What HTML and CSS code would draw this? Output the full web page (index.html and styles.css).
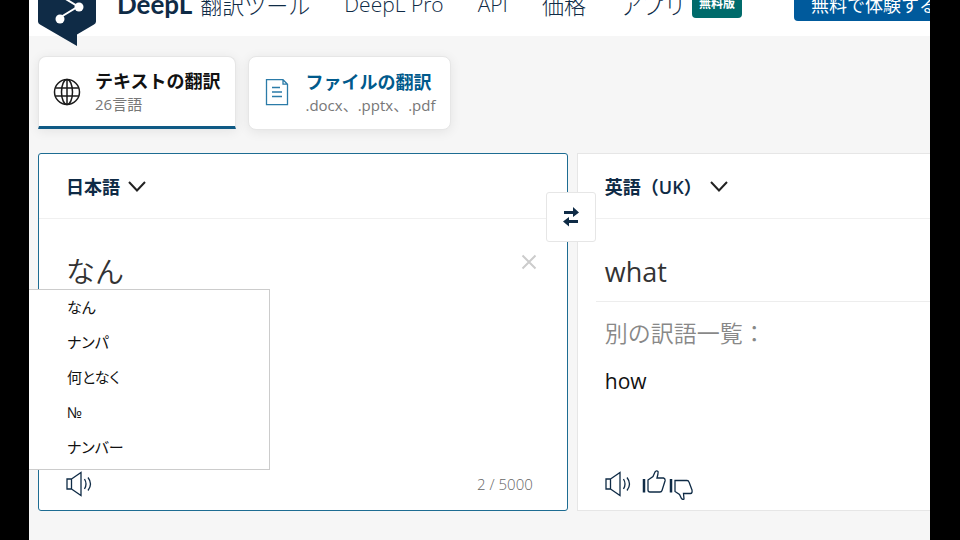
FILE: index.html
```html
<!DOCTYPE html>
<html lang="ja">
<head>
  <meta charset="UTF-8">
  <meta name="viewport" content="width=device-width, initial-scale=1.0">
  <title>DeepL 翻訳ツール</title>
  <link rel="stylesheet" href="styles.css">
</head>
<body>
  <div class="page">
    <header class="site-header">
      <a class="logo" href="#" aria-label="DeepL">
        <svg viewBox="0 0 58 66" width="58" height="66">
          <path fill="#0f2b46" d="M0 16.500Q0 14.500 2 13.500L27 .6Q29 -.4 31 .6L56 13.500Q58 14.500 58 16.500V41.500Q58 43.500 56 44.600L39 54.500V66L2 44.600Q0 43.500 0 41.500Z"/>
          <path fill="none" stroke="#fff" stroke-width="2" d="M22 15.500L40 26.500L22 37.500"/>
          <circle cx="22" cy="15" r="4.500" fill="#fff"/>
          <circle cx="41" cy="27" r="4.500" fill="#fff"/>
          <circle cx="22" cy="39" r="4.500" fill="#fff"/>
        </svg>
      </a>
      <a class="brand" href="#"><strong>DeepL</strong> <span>翻訳ツール</span></a>
      <nav>
        <a class="latin" href="#">DeepL Pro</a>
        <a class="latin" href="#">API</a>
        <a href="#">価格</a>
        <a href="#">アプリ<span class="badge">無料版</span></a>
      </nav>
      <button class="trial" type="button">無料で体験する</button>
    </header>

    <main>
      <div class="tabs">
        <button class="tab active" type="button">
          <svg viewBox="0 0 28 28" width="28" height="28" fill="none" stroke="#1b1b1b" stroke-width="1.500">
            <circle cx="14" cy="14" r="12.500"/>
            <ellipse cx="14" cy="14" rx="5.500" ry="12.500"/>
            <path d="M14 1.500V26.500M2.500 10H25.500M2.500 18H25.500"/>
          </svg>
          <span class="tab-text"><b>テキストの翻訳</b><small>26言語</small></span>
        </button>
        <button class="tab" type="button">
          <svg viewBox="0 0 28 28" width="28" height="28" fill="none" stroke="#2b7ba8" stroke-width="1.300">
            <path d="M3.500 .7H20L24.500 5.200V25.700H3.500ZM20 .7V5.200H24.500M9 8.500H17M9 13H19M9 17.500H19"/>
          </svg>
          <span class="tab-text"><b>ファイルの翻訳</b><small>.docx、.pptx、.pdf</small></span>
        </button>
      </div>

      <div class="translator">
        <section class="panel source">
          <div class="panel-head">
            <button class="lang" type="button">日本語
              <svg viewBox="0 0 18 12" width="18" height="12"><path d="M1 2L9 10.500L17 2"/></svg>
            </button>
          </div>
          <div class="panel-body">
            <textarea class="entry" aria-label="原文" rows="1" spellcheck="false">なん</textarea>
            <button class="clear" type="button" aria-label="クリア">
              <svg viewBox="0 0 16 16" width="16" height="16"><path d="M1.500 1.500L14.500 14.500M14.500 1.500L1.500 14.500"/></svg>
            </button>
          </div>
          <div class="panel-foot">
            <button class="icon" type="button" aria-label="原文を聞く">
              <svg viewBox="0 0 26 26" width="26" height="26"><path d="M1 8H5.500V18H1ZM5.500 8L15 1.500V24.500L5.500 18M18.500 8Q21.500 13 18.500 18M22 6.500Q27 13 22 19.500"/></svg>
            </button>
            <span class="count">2 / 5000</span>
          </div>
          <button class="swap" type="button" aria-label="言語を入れ替える">
            <svg viewBox="0 0 18 20" width="18" height="20" fill="#0f2b46">
              <path d="M2 4H11V0L17 5.500L11 10V7H2ZM16 13H7V10L1 14.500L7 19.500V16H16Z"/>
            </svg>
          </button>
          <ul class="ime">
            <li>なん</li>
            <li>ナンパ</li>
            <li>何となく</li>
            <li>№</li>
            <li>ナンバー</li>
          </ul>
        </section>

        <section class="panel target">
          <div class="panel-head">
            <button class="lang" type="button">英語（UK）
              <svg viewBox="0 0 18 12" width="18" height="12"><path d="M1 2L9 10.500L17 2"/></svg>
            </button>
          </div>
          <div class="panel-body">
            <p class="result">what</p>
            <div class="alternatives">
              <h2>別の訳語一覧：</h2>
              <p>how</p>
            </div>
          </div>
          <div class="panel-foot">
            <button class="icon" type="button" aria-label="訳文を聞く">
              <svg viewBox="0 0 26 26" width="26" height="26"><path d="M1 8H5.500V18H1ZM5.500 8L15 1.500V24.500L5.500 18M18.500 8Q21.500 13 18.500 18M22 6.500Q27 13 22 19.500"/></svg>
            </button>
            <div class="votes">
              <button class="icon" type="button" aria-label="良い">
                <svg viewBox="0 0 24 32" width="24" height="32"><path d="M6 12L11 8.500L13 4Q14.500 2 16 3.500Q16.500 4.500 15 10H21.500Q23.500 10.500 23 13L20 22.500Q19.500 24 18 24H8Q6 24 6 22Z"/><path stroke-width="2.500" d="M2 11V24.500"/></svg>
              </button>
              <button class="icon" type="button" aria-label="悪い">
                <svg viewBox="0 0 24 32" width="24" height="32"><path d="M6 12.500H18Q19.500 12.500 20 14L23 22Q23.500 25.500 21.500 25.500H14.500L15 31Q14 32 12.500 30.500L10.500 26.500L6 23.500Z"/><path stroke-width="2.500" d="M2 11V24.500"/></svg>
              </button>
            </div>
          </div>
        </section>
      </div>
    </main>
  </div>
</body>
</html>
```
FILE: styles.css
```css
* {
  box-sizing: border-box;
}

body {
  margin: 0;
  background: #000;
  color: #0f2b46;
  font-family: "Open Sans", "Noto Sans CJK JP", sans-serif;
}

button {
  margin: 0;
  padding: 0;
  border: 0;
  background: none;
  color: inherit;
  font: inherit;
  cursor: pointer;
}

a {
  color: inherit;
  text-decoration: none;
}

svg {
  display: block;
  flex: none;
}

.page {
  min-height: 100vh;
  margin: 0 30px 0 29px;
  background: #f6f6f6;
  overflow: hidden;
}

/* --- Header --- */
.site-header {
  display: flex;
  align-items: center;
  height: 64px;
  margin-top: -28px;
  padding-left: 9px;
  background: #fff;
  white-space: nowrap;
}

.logo {
  align-self: flex-end;
  margin: 0 21px -10px 0;
}

.brand {
  display: flex;
  align-items: center;
  gap: 8px;
  font-size: 22px;
  font-weight: 300;
}

.brand strong {
  font-family: Lato, sans-serif;
  font-size: 26px;
  font-weight: 700;
}

nav {
  display: flex;
  align-items: center;
  gap: 34px;
  margin-left: 34px;
  font-size: 22px;
  font-weight: 300;
}

nav a {
  display: flex;
  align-items: center;
  gap: 6px;
}

nav .latin {
  font-size: 21px;
}

.badge {
  padding: 0 7px;
  border-radius: 4px;
  background: #006b6b;
  color: #fff;
  font-size: 12px;
  font-weight: 700;
  line-height: 28px;
}

.trial {
  flex: none;
  height: 33px;
  margin-left: 52px;
  padding: 0 17px;
  border-radius: 4px;
  background: #005a9c;
  color: #fff;
  font-size: 18px;
}

/* --- Tabs --- */
main {
  padding: 20px 0 30px 9px;
}

.tabs {
  display: flex;
  gap: 12px;
}

.tab {
  display: flex;
  align-items: center;
  gap: 14px;
  height: 74px;
  padding: 0 15px 0 14px;
  border: 1px solid #e6e6e6;
  border-radius: 8px;
  background: #fff;
  box-shadow: 0 2px 12px rgba(0, 0, 0, 0.08);
  color: #005a8c;
  text-align: left;
}

.tab.active {
  height: 73px;
  border-bottom: 3px solid #0f5a85;
  border-radius: 8px 8px 0 0;
  color: #111;
}

.tab-text {
  display: flex;
  flex-direction: column;
}

.tab b {
  font-size: 18px;
  line-height: 24px;
}

.tab small {
  color: #777;
  font-size: 15px;
  line-height: 22px;
}

/* --- Panels --- */
.translator {
  display: grid;
  grid-template-columns: 3fr 2fr;
  gap: 9px;
  margin-top: 23px;
}

.panel {
  position: relative;
  display: flex;
  flex-direction: column;
  min-width: 0;
  min-height: 358px;
  border: 1px solid #e6e6e6;
  background: #fff;
}

.panel.source {
  border-color: #1d6c92;
  border-radius: 3px;
}

.panel.target {
  border-right: 0;
}

.panel-head {
  display: flex;
  align-items: center;
  height: 65px;
  padding: 0 27px;
  border-bottom: 1px solid #f0f0f0;
}

.lang {
  display: flex;
  align-items: center;
  gap: 8px;
  font-size: 18px;
  font-weight: 600;
}

.lang svg {
  fill: none;
  stroke: #222;
  stroke-width: 2;
}

.panel-body {
  flex: 1;
}

.source .panel-body {
  display: flex;
  align-items: flex-start;
  padding: 29px 30px 0 27px;
}

.entry {
  flex: 1;
  min-width: 0;
  height: 44px;
  padding: 0;
  border: 0;
  outline: 0;
  resize: none;
  background: none;
  color: #333;
  font: 350 29px/44px "Noto Sans CJK JP", sans-serif;
}

.clear {
  margin-top: 6px;
}

.clear svg {
  fill: none;
  stroke: #ccc;
  stroke-width: 2;
}

.result {
  margin: 0;
  padding: 31px 27px 7px;
  color: #333;
  font-size: 27px;
  line-height: 44px;
}

.alternatives {
  margin-left: 18px;
  padding: 15px 9px;
  border-top: 1px solid #ededed;
}

.alternatives h2 {
  margin: 0;
  color: #888;
  font-size: 23px;
  font-weight: 350;
  line-height: 32px;
}

.alternatives p {
  margin: 16px 0 0;
  color: #111;
  font-size: 21px;
  line-height: 32px;
}

.panel-foot {
  display: flex;
  align-items: center;
  height: 52px;
  padding: 0 34px 0 27px;
}

.icon svg {
  fill: none;
  stroke: #0f2b46;
  stroke-width: 1.3;
}

.count {
  margin-left: auto;
  color: #666;
  font-size: 15px;
  font-weight: 300;
}

.votes {
  display: flex;
  gap: 3px;
  margin-left: 11px;
}

.swap {
  position: absolute;
  top: 38px;
  right: -29px;
  z-index: 1;
  display: grid;
  place-items: center;
  width: 50px;
  height: 50px;
  border: 1px solid #e6e6e6;
  border-radius: 3px;
  background: #fff;
}

/* --- Input candidates --- */
.ime {
  position: absolute;
  top: 135px;
  left: -10px;
  width: 241px;
  margin: 0;
  padding: 0 0 4px 38px;
  border: 1px solid #ccc;
  border-left: 0;
  background: #fff;
  color: #111;
  font-size: 15px;
  font-feature-settings: "palt";
  line-height: 35px;
  list-style: none;
}
```
